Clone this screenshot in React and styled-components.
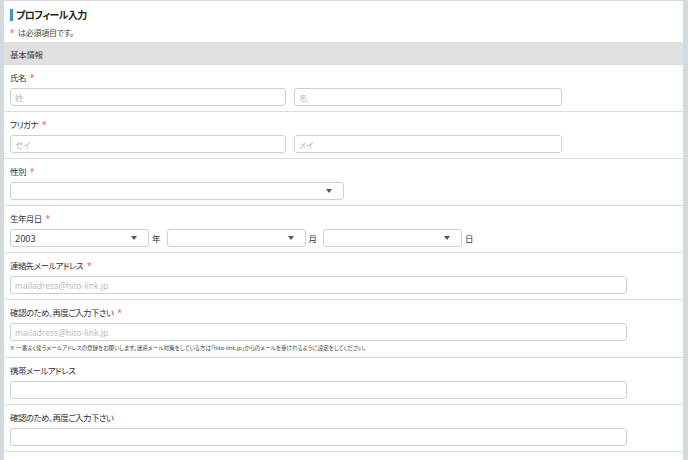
import styled, { createGlobalStyle } from "styled-components"

const GlobalStyle = createGlobalStyle`
  html, body {
    margin: 0;
    padding: 0;
    background: #d3dbe1;
    font-family: "Noto Sans", "Noto Sans CJK JP", sans-serif;
    font-feature-settings: "palt";
    color: #333;
  }
  input {
    font-feature-settings: "palt";
  }
`

const Panel = styled.div`
  margin: 0 5px 0 4px;
  background: #fff;
  border-top: 1px solid #dcdcdc;
  min-height: 459px;
`

const TitleArea = styled.div`
  padding: 7px 6px 4px;
`

const Title = styled.h1`
  margin: 0;
  display: flex;
  align-items: center;
  font-size: 10px;
  font-weight: 700;
  letter-spacing: -0.6px;
  color: #222;
  line-height: 14px;
  &::before {
    content: "";
    width: 3px;
    height: 12px;
    background: #3a8fd0;
    margin-right: 3px;
  }
`

const Note = styled.p`
  margin: 5px 0 0;
  font-size: 8px;
  line-height: 11px;
  letter-spacing: -0.3px;
  color: #444;
`

const Req = styled.span`
  color: #e8546a;
  margin-left: ${p => (p.$left ? "0" : "4px")};
  margin-right: ${p => (p.$left ? "4px" : "0")};
`

const SectionHead = styled.div`
  background: #e0e0e0;
  height: 23px;
  display: flex;
  align-items: center;
  padding: 0 6px;
  font-size: 8.5px;
  letter-spacing: -0.3px;
  color: #444;
`

const Field = styled.div`
  padding: 7px 6px 5px;
  border-bottom: 1px solid #dedede;
`

const Label = styled.div`
  font-size: 8.5px;
  line-height: 12px;
  letter-spacing: -0.6px;
  color: #333;
  margin-bottom: 4px;
`

const Row = styled.div`
  display: flex;
  align-items: center;
  gap: ${p => p.$gap || "8px"};
`

const TextInput = styled.input`
  display: block;
  box-sizing: border-box;
  width: ${p => p.$w}px;
  height: 18px;
  margin: 0;
  border: 1px solid #cfcfcf;
  border-radius: 3px;
  padding: 0 4px;
  font-family: inherit;
  font-size: 8.5px;
  outline: none;
  &::placeholder {
    color: #bcbcbc;
  }
`

const Select = styled.div`
  box-sizing: border-box;
  width: ${p => p.$w}px;
  height: 18px;
  border: 1px solid #cfcfcf;
  border-radius: 3px;
  padding: 0 4px;
  display: flex;
  align-items: center;
  font-size: 9px;
  color: #333;
  &::after {
    content: "";
    margin-left: auto;
    border-left: 3px solid transparent;
    border-right: 3px solid transparent;
    border-top: 4px solid #555;
    margin-right: 7px;
  }
`

const Unit = styled.span`
  font-size: 8.5px;
  color: #333;
  margin: 0 6px 0 3px;
`

const Hint = styled.div`
  font-size: 5.6px;
  line-height: 8px;
  color: #444;
  margin-top: 3px;
  white-space: nowrap;
`

export default function App() {
  return (
    <>
      <GlobalStyle />
      <Panel>
        <TitleArea>
          <Title>プロフィール入力</Title>
          <Note>
            <Req $left>*</Req>は必須項目です。
          </Note>
        </TitleArea>
        <SectionHead>基本情報</SectionHead>

        <Field>
          <Label>氏名<Req>*</Req></Label>
          <Row>
            <TextInput $w={276} placeholder="姓" />
            <TextInput $w={268} placeholder="名" />
          </Row>
        </Field>

        <Field>
          <Label>フリガナ<Req>*</Req></Label>
          <Row>
            <TextInput $w={276} placeholder="セイ" />
            <TextInput $w={268} placeholder="メイ" />
          </Row>
        </Field>

        <Field>
          <Label>性別<Req>*</Req></Label>
          <Select $w={334} />
        </Field>

        <Field>
          <Label>生年月日<Req>*</Req></Label>
          <Row $gap="0">
            <Select $w={139}>2003</Select>
            <Unit>年</Unit>
            <Select $w={139} />
            <Unit>月</Unit>
            <Select $w={139} />
            <Unit>日</Unit>
          </Row>
        </Field>

        <Field>
          <Label>連絡先メールアドレス<Req>*</Req></Label>
          <TextInput $w={617} placeholder="mailadress@hito-link.jp" />
        </Field>

        <Field>
          <Label>確認のため、再度ご入力下さい<Req>*</Req></Label>
          <TextInput $w={617} placeholder="mailadress@hito-link.jp" />
          <Hint>※ 一番よく使うメールアドレスの登録をお願いします。迷惑メール対策をしている方は「hito-link.jp」からのメールを受けれるように設定をしてください。</Hint>
        </Field>

        <Field>
          <Label>携帯メールアドレス</Label>
          <TextInput $w={617} />
        </Field>

        <Field>
          <Label>確認のため、再度ご入力下さい</Label>
          <TextInput $w={617} />
        </Field>
      </Panel>
    </>
  )
}
